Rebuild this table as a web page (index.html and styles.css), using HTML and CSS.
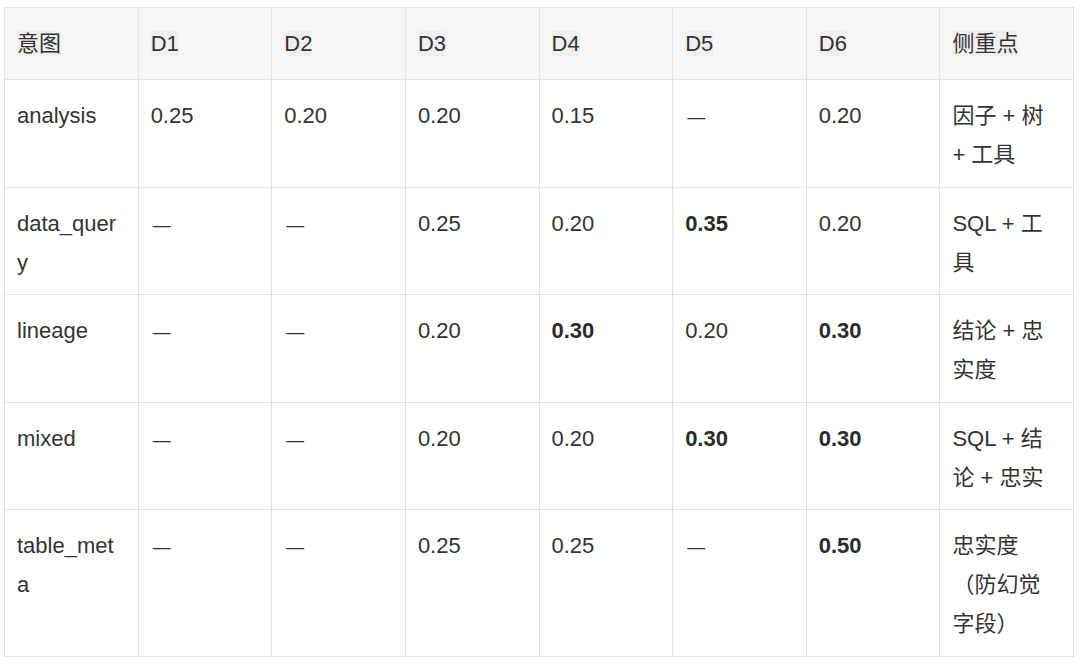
FILE: index.html
```html
<!DOCTYPE html>
<html lang="zh">
<head>
<meta charset="utf-8">
<link rel="stylesheet" href="styles.css">
</head>
<body>
<table class="grid">
  <colgroup>
    <col><col><col><col><col><col><col><col>
  </colgroup>
  <thead>
    <tr>
      <th><span class="hl">意图</span></th>
      <th><span class="hl">D1</span></th>
      <th><span class="hl">D2</span></th>
      <th><span class="hl">D3</span></th>
      <th><span class="hl">D4</span></th>
      <th><span class="hl">D5</span></th>
      <th><span class="hl">D6</span></th>
      <th><span class="hl">侧重点</span></th>
    </tr>
  </thead>
  <tbody>
    <tr>
      <td>analysis</td><td>0.25</td><td>0.20</td><td>0.20</td><td>0.15</td><td><span class="dash">—</span></td><td>0.20</td><td>因子 + 树 + 工具</td>
    </tr>
    <tr>
      <td>data_query</td><td><span class="dash">—</span></td><td><span class="dash">—</span></td><td>0.25</td><td>0.20</td><td><strong>0.35</strong></td><td>0.20</td><td>SQL + 工具</td>
    </tr>
    <tr>
      <td>lineage</td><td><span class="dash">—</span></td><td><span class="dash">—</span></td><td>0.20</td><td><strong>0.30</strong></td><td>0.20</td><td><strong>0.30</strong></td><td>结论 + 忠实度</td>
    </tr>
    <tr>
      <td>mixed</td><td><span class="dash">—</span></td><td><span class="dash">—</span></td><td>0.20</td><td>0.20</td><td><strong>0.30</strong></td><td><strong>0.30</strong></td><td>SQL + 结论 + 忠实</td>
    </tr>
    <tr>
      <td>table_meta</td><td><span class="dash">—</span></td><td><span class="dash">—</span></td><td>0.25</td><td>0.25</td><td><span class="dash">—</span></td><td><strong>0.50</strong></td><td>忠实度（防幻觉字段）</td>
    </tr>
  </tbody>
</table>
</body>
</html>
```
FILE: styles.css
```css
html, body {
  background: #ffffff;
}
body {
  margin: 7px 6px 0 4px;
  font-family: "Liberation Sans", "Noto Sans CJK SC", sans-serif;
  font-size: 22px;
  color: #333333;
}
.grid {
  width: 1070px;
  border-collapse: collapse;
  table-layout: fixed;
}
.grid th,
.grid td {
  border: 1px solid #e3e3e3;
  padding: 16px 12px 12.5px 12px;
  line-height: 39px;
  text-align: left;
  vertical-align: top;
  word-break: break-all;
}
.grid th {
  background: #f7f7f7;
  font-weight: normal;
  padding-top: 16px;
  padding-bottom: 16px;
}
.hl {
  background: #f0f0f0;
}
.dash {
  font-size: 18px;
  padding-left: 2px;
}
.grid strong {
  font-weight: bold;
  color: #2b2b2b;
}
```
